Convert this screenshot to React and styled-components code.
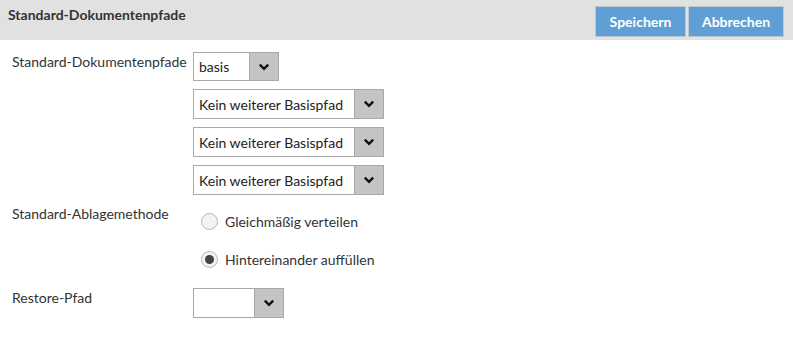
import React from "react";
import styled, { createGlobalStyle } from "styled-components";

const Global = createGlobalStyle`
  html, body { margin: 0; padding: 0; background: #fff; }
  body { font-family: Lato, "Liberation Sans", sans-serif; color: #333; }
`;

const Header = styled.div`
  height: 40px;
  background: #e1e1e1;
  display: flex;
  align-items: flex-start;
  justify-content: space-between;
  padding: 0 9px 0 8px;
`;

const Title = styled.h1`
  margin: 0;
  padding-top: 6px;
  font-size: 14px;
  font-weight: 700;
  color: #333;
`;

const Buttons = styled.div`
  display: flex;
  gap: 2px;
  padding-top: 6px;
`;

const Button = styled.button`
  height: 31px;
  width: ${(p) => p.$w}px;
  background: #5f9fd5;
  border: 1px solid #bcc8d2;
  color: #fff;
  font-family: inherit;
  font-size: 14px;
  font-weight: 700;
  padding: 0;
`;

const Form = styled.div`
  display: grid;
  grid-template-columns: 181px 1fr;
  row-gap: 8px;
  padding: 12px 0 0 12px;
`;

const Label = styled.div`
  font-size: 14px;
  padding-top: ${(p) => p.$pt || 1}px;
`;

const Stack = styled.div`
  display: flex;
  flex-direction: column;
  gap: ${(p) => p.$gap}px;
  padding: ${(p) => p.$pad || "0"};
`;

const Select = styled.div`
  display: flex;
  width: ${(p) => p.$w}px;
  height: ${(p) => p.$h || 30}px;
  border: 1px solid #a9a9a9;
  box-sizing: border-box;
  background: #fff;
`;

const SelectText = styled.div`
  flex: 1;
  display: flex;
  align-items: center;
  padding-left: 5px;
  font-size: 14px;
  color: #222;
`;

const Arrow = styled.div`
  width: 28px;
  background: #c4c4c4;
  border-left: 1px solid #a9a9a9;
  display: flex;
  align-items: center;
  justify-content: center;
`;

const Chevron = () => (
  <svg width="12" height="8" viewBox="0 0 12 8">
    <path d="M1.8 1.6 L6 5.8 L10.2 1.6" fill="none" stroke="#111" strokeWidth="2.4" />
  </svg>
);

const RadioRow = styled.label`
  display: flex;
  align-items: center;
  gap: 7px;
  height: 22px;
  font-size: 14px;
  padding-left: 8px;
`;

const RadioCircle = styled.span`
  width: 17px;
  height: 17px;
  border-radius: 50%;
  border: 1px solid #b5b5b5;
  background: #f3f3f3;
  box-sizing: border-box;
  display: flex;
  align-items: center;
  justify-content: center;
  &::after {
    content: "";
    width: 9px;
    height: 9px;
    border-radius: 50%;
    background: #444;
    display: ${(p) => (p.$on ? "block" : "none")};
  }
`;

const Sel = ({ w, h, text }) => (
  <Select $w={w} $h={h}>
    <SelectText>{text}</SelectText>
    <Arrow>
      <Chevron />
    </Arrow>
  </Select>
);

export default function App() {
  return (
    <>
      <Global />
      <Header>
        <Title>Standard-Dokumentenpfade</Title>
        <Buttons>
          <Button $w={91}>Speichern</Button>
          <Button $w={96}>Abbrechen</Button>
        </Buttons>
      </Header>
      <Form>
        <Label>Standard-Dokumentenpfade</Label>
        <Stack $gap={8}>
          <Sel w={86} h={29} text="basis" />
          <Sel w={191} text="Kein weiterer Basispfad" />
          <Sel w={191} text="Kein weiterer Basispfad" />
          <Sel w={191} text="Kein weiterer Basispfad" />
        </Stack>
        <Label $pt={2}>Standard-Ablagemethode</Label>
        <Stack $gap={16} $pad="7px 0 10px 0">
          <RadioRow>
            <RadioCircle />
            Gleichmäßig verteilen
          </RadioRow>
          <RadioRow>
            <RadioCircle $on />
            Hintereinander auffüllen
          </RadioRow>
        </Stack>
        <Label $pt={1}>Restore-Pfad</Label>
        <Sel w={91} text="" />
      </Form>
    </>
  );
}
